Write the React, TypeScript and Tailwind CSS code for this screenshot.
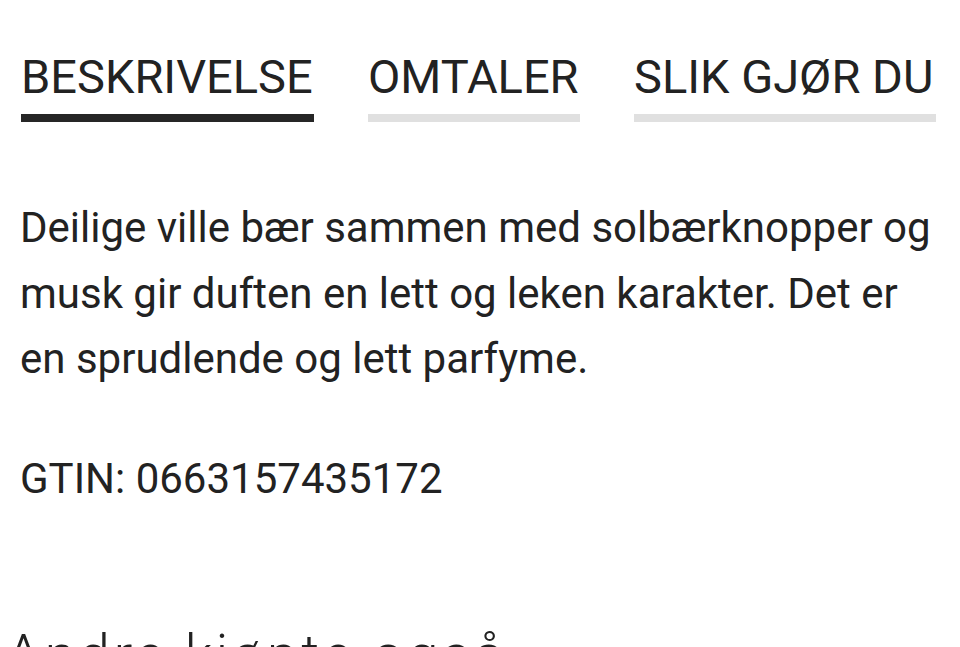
import React from "react";

const tabs = [
  { label: "BESKRIVELSE", w: "w-[293px]", active: true },
  { label: "OMTALER", w: "w-[212px]", active: false },
  { label: "SLIK GJØR DU", w: "w-[302px]", active: false },
];

export default function App() {
  return (
    <div
      className="w-[960px] h-[647px] overflow-hidden bg-white text-[#222222]"
      style={{ fontFamily: "Roboto, 'Liberation Sans', sans-serif" }}
    >
      <div className="flex gap-[54px] pl-[21px] pt-[53px]">
        {tabs.map((t) => (
          <div key={t.label} className={`flex flex-col ${t.w}`}>
            <span className="text-[47px] leading-none whitespace-nowrap">{t.label}</span>
            <div
              className={
                t.active
                  ? "mt-[14px] h-[8px] bg-[#262626]"
                  : "mt-[14px] h-[8px] bg-[#e0e0e0]"
              }
            />
          </div>
        ))}
      </div>
      <div className="pl-[20px] pr-[20px] mt-[73px]">
        <p className="text-[42px] leading-[65.5px]">
          Deilige ville bær sammen med solbærknopper og musk gir duften en lett og leken karakter. Det er en sprudlende og lett parfyme.
        </p>
        <p className="text-[42px] leading-[65.5px] mt-[54px]">GTIN: 0663157435172</p>
      </div>
      <h2 className="pl-[6px] mt-[116px] text-[56px] leading-none font-light tracking-[3.5px] whitespace-nowrap">
        Andre kjøpte også
      </h2>
    </div>
  );
}
